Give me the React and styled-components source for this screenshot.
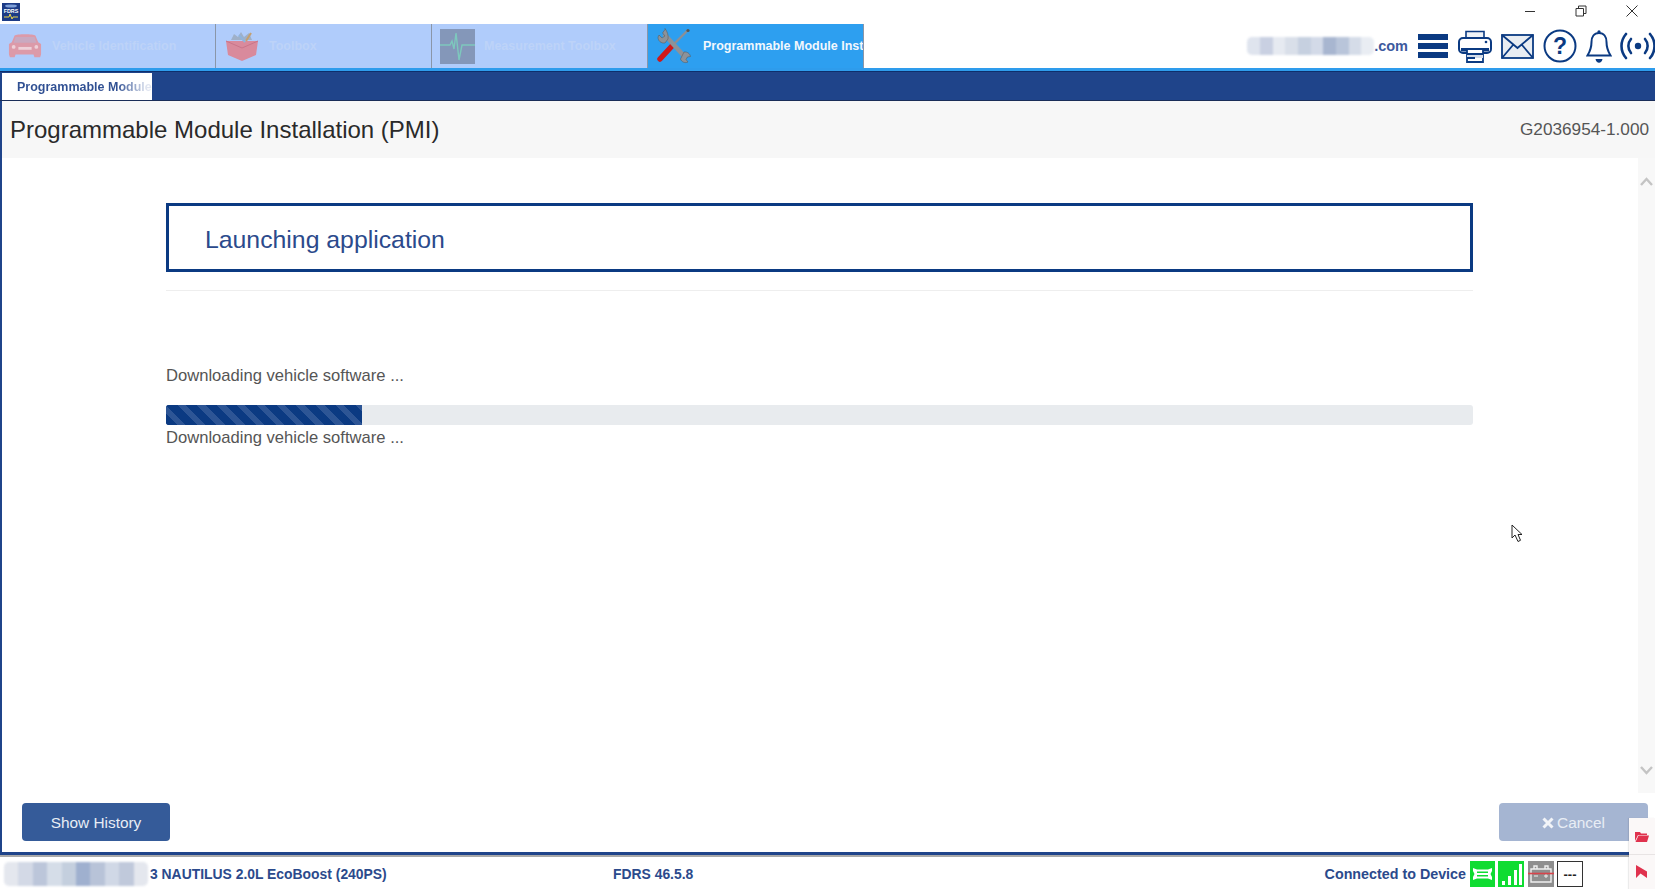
import React from 'react';
import styled, { createGlobalStyle } from 'styled-components';

const GlobalStyle = createGlobalStyle`
  html, body {
    margin: 0;
    padding: 0;
    height: 100%;
    overflow: hidden;
    background: #fff;
    font-family: "Liberation Sans", Arial, sans-serif;
  }
`;

const NAVY = '#1f448a';
const DEEP = '#0b3a82';

const mailMosaic = ['#dfe4ee', '#c9d0e2', '#e6eaf1', '#d9dfe9', '#c6d0e0', '#d3dae8', '#a8b6d0', '#b9c5da', '#d5dce8', '#e9edf3'];
const vinMosaic = ['#e4e7ee', '#d3d9e6', '#bcc6da', '#d5dde8', '#c4cfde', '#9fb0cf', '#b8c3d8', '#d0d8e6', '#c0c9db', '#e4e7ee'];

const FdrsLogo = () => (
  <svg width="18" height="18" viewBox="0 0 18 18">
    <rect width="18" height="18" fill="#1c3b86" />
    <ellipse cx="9" cy="3" rx="6" ry="1.6" fill="#7fa0d8" />
    <text x="9" y="10" fontSize="5.4" fontWeight="700" fill="#fff" textAnchor="middle" fontFamily="Liberation Sans">FDRS</text>
    <path d="M2 14h5l1-3 2 5 1-2h5" stroke="#e8d44a" strokeWidth="1" fill="none" />
  </svg>
);

const CarIcon = () => (
  <svg width="34" height="28" viewBox="0 0 36 28">
    <path d="M7 3c2-2 20-2 22 0l3 7 3 2v11l-1 3h-6l-1-3H8l-1 3H2l-1-3V12l3-2z" fill="#dc9aa9" />
    <path d="M8 4.500h20l2 6H6z" fill="#c9a9c0" />
    <rect x="11" y="15" width="14" height="3" fill="#eed0d8" />
    <circle cx="6" cy="15" r="2" fill="#eed0d8" />
    <circle cx="30" cy="15" r="2" fill="#eed0d8" />
  </svg>
);

const ToolboxIcon = () => (
  <svg width="34" height="30" viewBox="0 0 34 30">
    <path d="M1 10h32l-2 14-14 6-14-6z" fill="#d98a9c" />
    <path d="M1 10l16 7 16-7" stroke="#c9758a" fill="none" />
    <path d="M6 9l3-6 4 3 3-5 3 5 5-4 3 7z" fill="#9fb0c8" />
    <path d="M14 4l6 7" stroke="#8fb4dc" strokeWidth="2" />
    <path d="M26 2l-5 8" stroke="#c4a070" strokeWidth="2" />
  </svg>
);

const WaveIcon = () => (
  <svg width="35" height="35" viewBox="0 0 35 35">
    <rect width="35" height="35" fill="#8497b9" />
    <path d="M0 16h10l2-4 2 8 2-16 3 27 3-15h13" stroke="#7dc8bd" strokeWidth="1.4" fill="none" />
  </svg>
);

const ToolsIcon = () => (
  <svg width="34" height="36" viewBox="0 0 34 36">
    <path d="M31 2L14 19" stroke="#8a9098" strokeWidth="2.4" />
    <circle cx="31" cy="2.500" r="1.600" fill="#555" />
    <path d="M15 18L3 31" stroke="#d01818" strokeWidth="5.500" strokeLinecap="round" />
    <path d="M7 6l21 23" stroke="#8d9299" strokeWidth="4.600" />
    <path d="M8 1.500L5.500 5l2.500 3-3 2-3-3-1 2c0 4 3 6.500 7 6l3-4c.5-4-.5-7-3-10.500z" fill="#8d9299" stroke="#555" strokeWidth=".5" />
    <path d="M27 24c3-.5 6 1.500 6.500 4.500l-3 .5-1.500 2.500 2 2.500c-3 1.500-6.500 0-7.500-3z" fill="#8d9299" stroke="#555" strokeWidth=".5" />
  </svg>
);

const PrinterIcon = () => (
  <svg width="34" height="33" viewBox="0 0 34 33" fill="none" stroke={DEEP}>
    <path d="M8 8V1.500h18V8" strokeWidth="1.600" fill="#eef2f7" />
    <rect x="1" y="8" width="32" height="15" rx="4" strokeWidth="2" fill="#fff" />
    <circle cx="28" cy="12" r="1.300" fill={DEEP} stroke="none" />
    <rect x="3" y="18" width="28" height="3.500" fill={DEEP} stroke="none" />
    <path d="M9 19h16v13H9z" fill="#fff" strokeWidth="1.800" />
    <rect x="9" y="24" width="16" height="4" fill="#d4dce8" stroke="none" />
    <path d="M9 24h16M9 28h8" strokeWidth="1.800" />
  </svg>
);

const MailIcon = () => (
  <svg width="33" height="25" viewBox="0 0 33 25" fill="#e9edf2" stroke={DEEP} strokeWidth="1.800">
    <rect x="1" y="1" width="31" height="23" />
    <path d="M1 1l15.500 13L32 1M1 24l11-13M32 24L21 11" fill="none" />
  </svg>
);

const HelpIcon = () => (
  <svg width="34" height="34" viewBox="0 0 34 34">
    <circle cx="17" cy="17" r="15.500" fill="none" stroke={DEEP} strokeWidth="2" />
    <text x="17" y="25" fontSize="23" fontWeight="700" fill={DEEP} textAnchor="middle" fontFamily="Liberation Sans">?</text>
  </svg>
);

const BellIcon = () => (
  <svg width="26" height="35" viewBox="0 0 26 35" fill="none" stroke={DEEP} strokeWidth="2">
    <path d="M13 4c-5 0-7.500 4-7.500 9 0 7-2.500 11-4 13.500h23c-1.500-2.500-4-6.500-4-13.500 0-5-2.500-9-7.500-9z" />
    <circle cx="13" cy="2.800" r="1.600" fill={DEEP} stroke="none" />
    <path d="M9.500 30h7c-.5 2.500-1.800 3.800-3.500 3.800S10 32.500 9.500 30z" fill={DEEP} stroke="none" />
  </svg>
);

const SignalIcon = () => (
  <svg width="36" height="30" viewBox="0 0 36 30" fill="none" stroke={DEEP} strokeWidth="2.600" strokeLinecap="round">
    <circle cx="18" cy="15" r="3.200" fill={DEEP} stroke="none" />
    <path d="M11 8c-3.500 4-3.500 10 0 14M25 8c3.500 4 3.500 10 0 14" />
    <path d="M6 3C0 10 0 20 6 27M30 3c6 7 6 17 0 24" />
  </svg>
);

const WindowIcon = ({ kind }) => (
  <svg width="14" height="14" viewBox="0 0 14 14" fill="none" stroke="#333" strokeWidth="1">
    {kind === 'min' && <path d="M2 7.500h10" />}
    {kind === 'max' && <path d="M2 4.500h7.500V12H2zM4.500 4.500V2H12v7.500H9.500" />}
    {kind === 'close' && <path d="M1.500 1.500l11 11M12.500 1.500l-11 11" />}
  </svg>
);

const ScrollChevron = ({ up }) => (
  <svg width="13" height="9" viewBox="0 0 13 9" fill="none" stroke="#c4c4c4" strokeWidth="2.400">
    <path d={up ? 'M1 8l5.500-6L12 8' : 'M1 1l5.500 6L12 1'} />
  </svg>
);

const LinkIcon = () => (
  <svg width="25" height="26" viewBox="0 0 25 26">
    <rect width="25" height="26" fill="#10dc32" />
    <path d="M3 7l4 1.500h11L22 7v3l-1.500 3 1.500 3v3l-4-1.500H7L3 19v-3l1.500-3L3 10z" fill="#fff" />
    <path d="M7 10.500h11v1.600H7zM7 14h11v1.600H7z" fill="#10dc32" />
  </svg>
);

const BarsIcon = () => (
  <svg width="26" height="26" viewBox="0 0 26 26">
    <rect width="26" height="26" fill="#10dc32" />
    <path d="M4 20h3v4H4zM10 15h3v9h-3zM16 9h3v15h-3zM21 3h3v21h-3z" fill="#fff" />
  </svg>
);

const BatteryIcon = () => (
  <svg width="26" height="26" viewBox="0 0 26 26">
    <rect width="26" height="26" fill="#8f8f8f" />
    <path d="M3 8h20v13H3zM6 5h3v3H6zM17 5h3v3h-3z" fill="none" stroke="#f0f0f0" strokeWidth="1.400" />
    <path d="M6 15h4M16 15h4M18 13v4" stroke="#f0f0f0" />
    <path d="M0 12.500h26" stroke="#d8434a" strokeWidth="1.600" />
  </svg>
);

const CrossIcon = () => (
  <svg width="12" height="12" viewBox="0 0 12 12" fill="none" stroke="#f2f4f8" strokeWidth="3">
    <path d="M1.500 1.500l9 9M10.500 1.500l-9 9" />
  </svg>
);

const FolderIcon = () => (
  <svg width="14" height="12" viewBox="0 0 14 12" fill="#e0324e">
    <path d="M0 2h5l1 1.500h6V5H3L0 11z" />
    <path d="M3.500 5.500H14L12 12H.5z" />
  </svg>
);

const FlagIcon = () => (
  <svg width="12" height="13" viewBox="0 0 12 13" fill="#e0324e">
    <path d="M0 0l11 6.500V13L4.500 8.500 0 13z" />
  </svg>
);

const Cursor = () => (
  <svg width="12" height="19" viewBox="0 0 12 19" fill="#fff" stroke="#222" strokeWidth="1">
    <path d="M1 1v13l3-3 3 6.500 2.500-1.200L7 10.500h4z" />
  </svg>
);

const Page = styled.div`
  position: relative;
  display: flex;
  flex-direction: column;
  height: 100vh;
  overflow: hidden;
  background: #fff;
`;

const TitleBar = styled.div`
  display: flex;
  align-items: center;
  justify-content: space-between;
  height: 24px;
  flex: none;
  padding: 0 0 0 2px;
`;

const WindowButtons = styled.div`
  display: flex;
  align-items: center;
  margin: -2px -2px 0 0;
`;

const WindowButton = styled.span`
  display: flex;
  align-items: center;
  justify-content: center;
  width: 51px;
`;

const NavBar = styled.div`
  display: flex;
  align-items: stretch;
  height: 47px;
  flex: none;
  box-sizing: border-box;
  border-bottom: 3px solid #2e9cec;
`;

const NavTab = styled.div`
  display: flex;
  align-items: center;
  flex: none;
  width: 216px;
  padding-left: ${p => p.$pad}px;
  gap: ${p => p.$gap}px;
  overflow: hidden;
  white-space: nowrap;
  box-sizing: border-box;
  background: ${p => p.$active ? '#2d9ff0' : '#b0ccfb'};
  border-right: 1px solid #8a96a8;
  color: ${p => p.$active ? '#f2f7fd' : '#bdd3f8'};
  font-size: 12.500px;
  font-weight: 700;
  svg {
    flex: none;
  }
`;

const NavTools = styled.div`
  display: flex;
  align-items: center;
  margin-left: auto;
  margin-right: -1px;
`;

const NavSlot = styled.span`
  display: flex;
  margin-left: ${p => p.$gap}px;
`;

const MaskedMail = styled.div`
  display: flex;
  align-items: center;
  color: #3d5a9e;
  font-size: 14.500px;
  font-weight: 700;
  margin-right: 10px;
`;

const Mosaic = styled.div`
  display: grid;
  grid-template-columns: repeat(${p => p.$cols}, 1fr);
  width: ${p => p.$width}px;
  height: ${p => p.$height}px;
  border-radius: 5px;
  overflow: hidden;
  filter: blur(0.8px);
`;

const MosaicCell = styled.span`
  background: ${p => p.$color};
`;

const Burger = styled.div`
  display: flex;
  flex-direction: column;
  gap: 2.500px;
  width: 30px;
  margin-right: 2px;
  span {
    height: 6.500px;
    background: ${DEEP};
  }
`;

const SubTabs = styled.div`
  display: flex;
  align-items: flex-end;
  height: 30px;
  flex: none;
  box-sizing: border-box;
  padding-left: 2px;
  background: ${NAVY};
  border-top: 1px solid #0e2f6c;
  border-bottom: 1px solid #1a2d58;
`;

const SubTab = styled.div`
  width: 150px;
  height: 27px;
  box-sizing: border-box;
  padding: 7px 0 0 15px;
  background: #fff;
  font-size: 12.500px;
  font-weight: 700;
  white-space: nowrap;
`;

const SubTabLabel = styled.span`
  color: transparent;
  background: linear-gradient(90deg, #2f4f92 74%, #dfe4f0 96%);
  -webkit-background-clip: text;
  background-clip: text;
`;

const Header = styled.div`
  display: flex;
  align-items: center;
  justify-content: space-between;
  height: 57px;
  flex: none;
  padding: 0 6px 0 8px;
  background: #f7f7f7;
  border-left: 2px solid ${NAVY};
  box-sizing: border-box;
`;

const HeaderTitle = styled.div`
  font-size: 24px;
  color: #2a2a2a;
`;

const HeaderCode = styled.div`
  font-size: 17.200px;
  color: #555;
`;

const Body = styled.div`
  flex: 1;
  display: flex;
  min-height: 0;
  border-left: 2px solid ${NAVY};
`;

const Main = styled.main`
  flex: 1;
  display: flex;
  flex-direction: column;
  min-width: 0;
  padding: 45px 165px 0 164px;
`;

const TitleBox = styled.div`
  display: flex;
  align-items: center;
  height: 69px;
  box-sizing: border-box;
  padding: 5px 0 0 36px;
  border: 3px solid ${DEEP};
  font-size: 24.800px;
  color: #2b4a8c;
`;

const Rule = styled.div`
  height: 1px;
  margin-top: 18px;
  background: #eeeeee;
`;

const StatusText = styled.div`
  font-size: 16.600px;
  line-height: 20px;
  color: #555;
  margin-top: ${p => p.$top}px;
`;

const ProgressTrack = styled.div`
  height: 20px;
  margin-top: 19px;
  border-radius: 3px;
  background: #e8ebee;
  overflow: hidden;
`;

const ProgressFill = styled.div`
  height: 100%;
  background-color: #0b3a82;
  background-image: repeating-linear-gradient(
    45deg,
    #0b3a82 0 8px,
    #2d5595 8px 14px
  );
`;

const Scrollbar = styled.div`
  display: flex;
  flex-direction: column;
  align-items: center;
  justify-content: space-between;
  flex: none;
  width: 17px;
  height: 635px;
  padding: 19px 0 18px;
  box-sizing: border-box;
  background: #f8f8f8;
`;

const ActionRow = styled.div`
  display: flex;
  align-items: flex-start;
  justify-content: space-between;
  height: 59px;
  flex: none;
  padding: 10px 7px 0 20px;
  box-sizing: border-box;
  border-left: 2px solid ${NAVY};
`;

const ActionButton = styled.div`
  display: flex;
  align-items: center;
  justify-content: center;
  gap: 3px;
  width: ${p => p.$width}px;
  height: 38px;
  box-sizing: border-box;
  padding-top: 2px;
  border-radius: 4px;
  color: #e8edf5;
  background: ${p => p.$muted ? '#a5b5d2' : '#355b99'};
  font-size: 15.400px;
`;

const Footer = styled.footer`
  display: flex;
  align-items: center;
  height: 37px;
  flex: none;
  box-sizing: border-box;
  border-top: 3px solid ${NAVY};
  box-shadow: inset 0 2px 0 #a9a9a9;
  padding: 4px 0 0 4px;
  color: #2b4a8c;
  font-size: 13.900px;
  font-weight: 700;
  white-space: nowrap;
`;

const Vehicle = styled.div`
  display: flex;
  align-items: center;
  width: 609px;
  gap: 2px;
`;

const Connection = styled.div`
  display: flex;
  align-items: center;
  gap: 3.500px;
  margin-left: auto;
  margin-right: 72px;
  font-size: 14.300px;
`;

const DeviceBox = styled.div`
  display: flex;
  align-items: center;
  justify-content: center;
  width: 26px;
  height: 26px;
  box-sizing: border-box;
  border: 1.500px solid #333;
  color: #222;
  font-size: 13px;
`;

const SideTab = styled.div`
  position: absolute;
  right: 0;
  bottom: 0;
  width: 26px;
  height: 71px;
  background: #fbf8f8;
  box-shadow: -1px 0 1px rgba(0, 0, 0, 0.08);
  display: grid;
  grid-template-rows: 1fr 1fr;
`;

const SideTabItem = styled.div`
  display: flex;
  align-items: center;
  justify-content: center;
  & + & {
    border-top: 1px solid #e8e4e4;
  }
`;

const PointerMark = styled.div`
  position: absolute;
  left: 1511px;
  top: 524px;
`;

const App = () => {
  const progress = 15;
  return (
    <>
      <GlobalStyle />
      <Page>
        <TitleBar>
          <FdrsLogo />
          <WindowButtons>
            <WindowButton><WindowIcon kind="min" /></WindowButton>
            <WindowButton><WindowIcon kind="max" /></WindowButton>
            <WindowButton><WindowIcon kind="close" /></WindowButton>
          </WindowButtons>
        </TitleBar>

        <NavBar>
          <NavTab $pad={8} $gap={10}><CarIcon />Vehicle Identification</NavTab>
          <NavTab $pad={9} $gap={10}><ToolboxIcon />Toolbox</NavTab>
          <NavTab $pad={8} $gap={9}><WaveIcon />Measurement Toolbox</NavTab>
          <NavTab $active $pad={9} $gap={12}><ToolsIcon />Programmable Module Inst</NavTab>
          <NavTools>
            <MaskedMail>
              <Mosaic $cols={10} $width={127} $height={18}>
                {mailMosaic.map((c, i) => <MosaicCell key={i} $color={c} />)}
              </Mosaic>
              .com
            </MaskedMail>
            <Burger><span /><span /><span /></Burger>
            <NavSlot $gap={8}><PrinterIcon /></NavSlot>
            <NavSlot $gap={9}><MailIcon /></NavSlot>
            <NavSlot $gap={9}><HelpIcon /></NavSlot>
            <NavSlot $gap={9}><BellIcon /></NavSlot>
            <NavSlot $gap={8}><SignalIcon /></NavSlot>
          </NavTools>
        </NavBar>

        <SubTabs>
          <SubTab><SubTabLabel>Programmable Module</SubTabLabel></SubTab>
        </SubTabs>

        <Header>
          <HeaderTitle>Programmable Module Installation (PMI)</HeaderTitle>
          <HeaderCode>G2036954-1.000</HeaderCode>
        </Header>

        <Body>
          <Main>
            <TitleBox>Launching application</TitleBox>
            <Rule />
            <StatusText $top={75}>Downloading vehicle software ...</StatusText>
            <ProgressTrack>
              <ProgressFill style={{ width: `${progress}%` }} />
            </ProgressTrack>
            <StatusText $top={3}>Downloading vehicle software ...</StatusText>
          </Main>
          <Scrollbar>
            <ScrollChevron up />
            <ScrollChevron />
          </Scrollbar>
        </Body>

        <ActionRow>
          <ActionButton $width={148}>Show History</ActionButton>
          <ActionButton $width={149} $muted><CrossIcon />Cancel</ActionButton>
        </ActionRow>

        <Footer>
          <Vehicle>
            <Mosaic $cols={10} $width={144} $height={24}>
              {vinMosaic.map((c, i) => <MosaicCell key={i} $color={c} />)}
            </Mosaic>
            3 NAUTILUS 2.0L EcoBoost (240PS)
          </Vehicle>
          <div>FDRS 46.5.8</div>
          <Connection>
            Connected to Device
            <LinkIcon />
            <BarsIcon />
            <BatteryIcon />
            <DeviceBox>---</DeviceBox>
          </Connection>
        </Footer>

        <SideTab>
          <SideTabItem><FolderIcon /></SideTabItem>
          <SideTabItem><FlagIcon /></SideTabItem>
        </SideTab>

        <PointerMark><Cursor /></PointerMark>
      </Page>
    </>
  );
};

export default App;
